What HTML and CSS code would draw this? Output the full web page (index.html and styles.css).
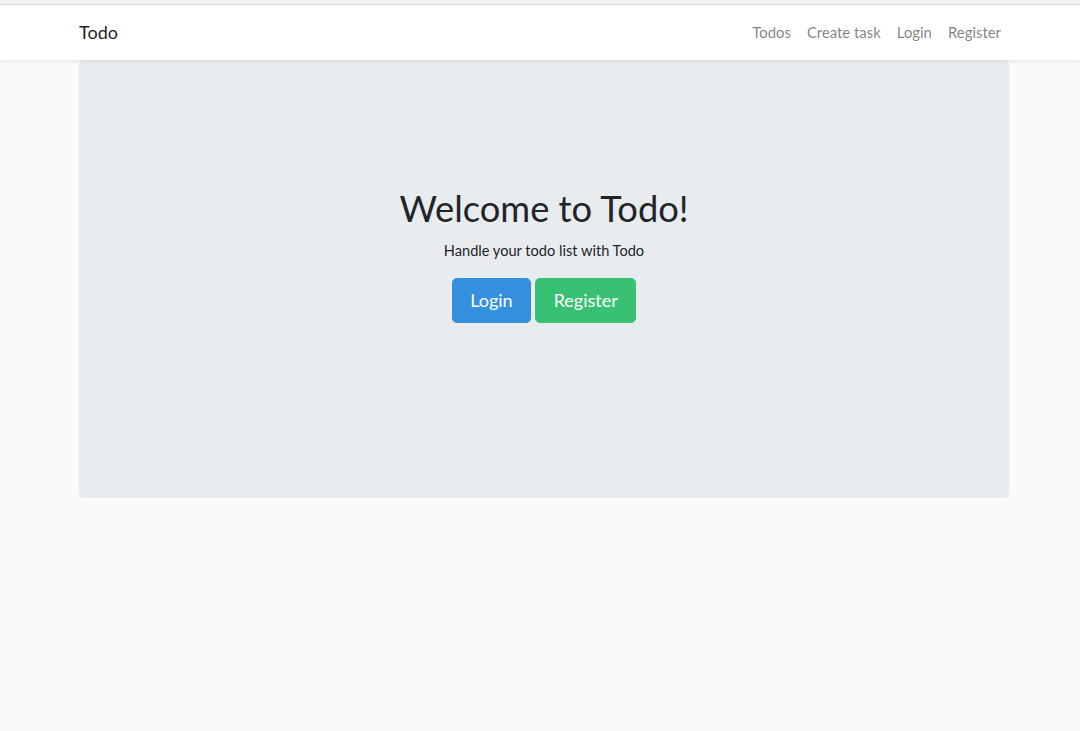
FILE: index.html
```html
<!DOCTYPE html>
<html lang="en">
<head>
<meta charset="utf-8">
<title>Todo</title>
<link rel="stylesheet" href="styles.css">
</head>
<body>
<div class="topstrip"></div>
<nav class="navbar">
  <div class="container nav-inner">
    <a class="brand" href="#">Todo</a>
    <ul class="nav-links">
      <li><a href="#">Todos</a></li>
      <li><a href="#">Create task</a></li>
      <li><a href="#">Login</a></li>
      <li><a href="#">Register</a></li>
    </ul>
  </div>
</nav>
<main class="container">
  <section class="jumbotron">
    <h1 class="title">Welcome to Todo!</h1>
    <p class="subtitle">Handle your todo list with Todo</p>
    <div class="actions">
      <a class="btn btn-primary" href="#">Login</a>
      <a class="btn btn-success" href="#">Register</a>
    </div>
  </section>
</main>
</body>
</html>
```

FILE: styles.css
```css
* { box-sizing: border-box; }
html, body { margin: 0; padding: 0; }
body {
  background: #f8fafc;
  color: #212529;
  font-family: Lato, "Noto Sans", sans-serif;
  font-size: 14.4px;
  line-height: 1.6;
  height: 731px;
  overflow: hidden;
}
a { text-decoration: none; }
.topstrip {
  height: 5px;
  background: #f2f2f2;
  border-bottom: 1px solid #dadada;
}
.container {
  width: 930px;
  margin-left: 79px;
}
.navbar {
  background: #fff;
  height: 55px;
  box-shadow: 0 2px 4px rgba(0, 0, 0, 0.075);
  position: relative;
  z-index: 1;
}
.nav-inner {
  height: 100%;
  display: flex;
  align-items: center;
  justify-content: space-between;
}
.brand {
  color: rgba(0, 0, 0, 0.9);
  font-size: 18px;
  line-height: 27px;
}
.nav-links {
  list-style: none;
  margin: 0;
  padding: 0;
  display: flex;
}
.nav-links a {
  display: block;
  padding: 8px;
  color: rgba(0, 0, 0, 0.5);
  font-size: 14.9px;
  line-height: 23px;
}
.jumbotron {
  background: #e9ecef;
  border-radius: 4.8px;
  height: 438px;
  padding-top: 127px;
  text-align: center;
}
.title {
  margin: 0 0 9px;
  font-size: 36.3px;
  font-weight: 400;
  line-height: 43px;
  color: #212529;
}
.subtitle {
  margin: 0 0 16px;
  font-size: 14.6px;
  line-height: 23px;
}
.actions {
  display: flex;
  justify-content: center;
  gap: 4px;
}
.btn {
  display: inline-block;
  font-size: 18px;
  line-height: 27px;
  padding: 8px 17.5px;
  border: 1px solid transparent;
  border-radius: 4.8px;
  color: #fff;
}
.btn-primary { background: #3490dc; border-color: #3490dc; }
.btn-success { background: #38c172; border-color: #38c172; }
```
